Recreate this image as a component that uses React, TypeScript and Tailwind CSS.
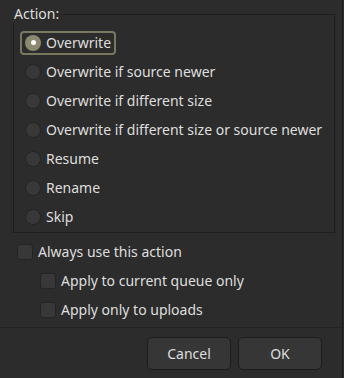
import { useState } from 'react'

const options = [
  'Overwrite',
  'Overwrite if source newer',
  'Overwrite if different size',
  'Overwrite if different size or source newer',
  'Resume',
  'Rename',
  'Skip',
]

function Radio({ checked }: { checked: boolean }) {
  return checked ? (
    <span className="flex h-[16px] w-[16px] shrink-0 items-center justify-center rounded-full bg-[#8b896f]">
      <span className="h-[5px] w-[5px] rounded-full bg-white" />
    </span>
  ) : (
    <span className="h-[16px] w-[16px] shrink-0 rounded-full border border-[#242424] bg-[#383838]" />
  )
}

function Check({ label, indent }: { label: string; indent?: boolean }) {
  return (
    <div className={`flex h-[29px] items-center gap-[5px] ${indent ? 'pl-[40px]' : 'pl-[17px]'}`}>
      <span className="h-[16px] w-[16px] shrink-0 rounded-[3px] border border-[#242424] bg-[#383838]" />
      <span>{label}</span>
    </div>
  )
}

export default function App() {
  const [selected, setSelected] = useState(0)

  return (
    <div
      className="flex h-[378px] w-[344px] flex-col bg-[#2c2c2c] text-[14px] text-[#dedede] select-none"
      style={{ fontFamily: '"Noto Sans", sans-serif' }}
    >
      <div className="flex h-full w-[343px] flex-col border-r border-[#1c1c1c]">
        {/* grupo de acciones */}
        <div className="relative ml-[13px] mt-[14px] h-[219px] w-[322px] border border-[#1e1e1e] pt-[13px]">
          <span className="absolute left-[-1px] top-[-10px] bg-[#2c2c2c] pb-[1px] pr-[2px] pl-[1px] leading-[17px]">
            Action:
          </span>
          {options.map((o, i) => (
            <div key={o} className="flex h-[29px] items-center" onClick={() => setSelected(i)}>
              <div
                className={`ml-[6px] flex h-[24px] items-center gap-[5px] rounded-[4px] border-2 px-[3px] ${
                  i === selected ? 'border-[#7a7760]' : 'border-transparent'
                }`}
              >
                <Radio checked={i === selected} />
                <span>{o}</span>
              </div>
            </div>
          ))}
        </div>

        <div className="mt-[4px] flex flex-col">
          <Check label="Always use this action" />
          <Check label="Apply to current queue only" indent />
          <Check label="Apply only to uploads" indent />
        </div>

        <div className="mt-[3px] h-px bg-[#222222]" />

        <div className="flex justify-end gap-[7px] pr-[20px] pt-[9px]">
          <button className="h-[33px] w-[84px] rounded-[5px] border border-[#1c1c1c] bg-[#363636] text-[#dedede]">
            Cancel
          </button>
          <button className="h-[33px] w-[84px] rounded-[5px] border border-[#1c1c1c] bg-[#363636] text-[#dedede]">
            OK
          </button>
        </div>
      </div>
    </div>
  )
}
